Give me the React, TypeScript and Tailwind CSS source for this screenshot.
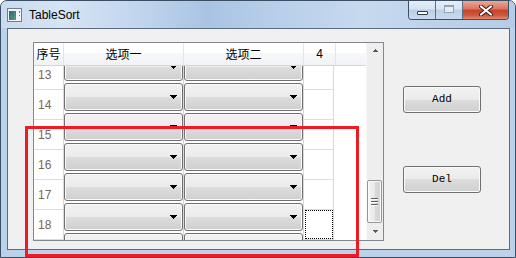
import React from 'react';

const rows = [13, 14, 15, 16, 17, 18, 19];
const labelRows = [13, 14, 15, 16, 17, 18];

const DownArrow: React.FC<{ small?: boolean }> = ({ small }) =>
  small ? (
    <svg width="7" height="4" viewBox="0 0 7 4" shapeRendering="crispEdges">
      <path d="M1 0h5v1h-1v1h-1v1h-1v-1h-1v-1h-1z" fill="#5a5a5a" />
    </svg>
  ) : (
    <svg width="7" height="4" viewBox="0 0 7 4" shapeRendering="crispEdges">
      <path d="M0 0h7v1h-1v1h-1v1h-1v1h-1v-1h-1v-1h-1v-1h-1z" fill="#000" />
    </svg>
  );

const UpArrow: React.FC = () => (
  <svg width="7" height="4" viewBox="0 0 7 4" shapeRendering="crispEdges">
    <path d="M3 0h1v1h1v1h1v1h-5v-1h1v-1h1z" fill="#5a5a5a" />
  </svg>
);

const Combo: React.FC = () => (
  <div className="h-[28px] rounded-[3px] border border-[#707070] bg-[linear-gradient(#f2f2f2_0%,#ebebeb_50%,#dddddd_50%,#cfcfcf_100%)] shadow-[inset_0_0_0_1px_#fafafa] flex items-center justify-end pr-[5px]">
    <DownArrow />
  </div>
);

const PushButton: React.FC<{ label: string }> = ({ label }) => (
  <button className="w-[78px] h-[27px] rounded-[3px] border border-[#707070] bg-[linear-gradient(#f2f2f2_0%,#ebebeb_50%,#dddddd_50%,#cfcfcf_100%)] shadow-[inset_0_0_0_1px_#fbfbfb] flex items-center justify-center font-['Liberation_Mono',monospace] text-[11px] text-black">
    {label}
  </button>
);

const AppIcon: React.FC = () => (
  <svg width="15" height="14" viewBox="0 0 15 14">
    <defs>
      <linearGradient id="ic" x1="0" y1="0" x2="1" y2="1">
        <stop offset="0" stopColor="#2f5f86" />
        <stop offset="1" stopColor="#5aa171" />
      </linearGradient>
    </defs>
    <rect x="0.5" y="0.5" width="14" height="13" fill="#f3f5f7" stroke="#6e7e90" />
    <rect x="2" y="3" width="7" height="9" fill="url(#ic)" />
    <rect x="12" y="3" width="1" height="2" fill="#4a7fae" />
    <rect x="12" y="7" width="1" height="1" fill="#4a7fae" />
  </svg>
);

const TitleButtons: React.FC = () => (
  <div className="flex h-[19px] rounded-b-[4px] border border-t-0 border-[#3e4f63] overflow-hidden mr-[6px]">
    <div className="w-[27px] border-r border-[#5d6f84] bg-[linear-gradient(#e6eef8_0%,#d6e3f2_45%,#bccfe6_50%,#cadbee_100%)] flex justify-center pt-[10px]">
      <div className="w-[11px] h-[4px] bg-white border border-[#2f3b48] rounded-[1px]" />
    </div>
    <div className="w-[27px] border-r border-[#5d6f84] bg-[linear-gradient(#e6eef8_0%,#d6e3f2_45%,#bccfe6_50%,#cadbee_100%)] flex justify-center pt-[4px]">
      <div className="w-[10px] h-[8px] border border-[#93a3b6] border-t-2 bg-[#e3ebf5]" />
    </div>
    <div className="w-[45px] bg-[linear-gradient(#eaa898_0%,#d9735e_45%,#c5422c_50%,#cf5840_80%,#e28c70_100%)] flex items-center justify-center">
      <svg width="14" height="11" viewBox="0 0 14 11">
        <path d="M2 1.5 L12 9.5 M12 1.5 L2 9.5" stroke="#3a1a14" strokeWidth="4" strokeLinecap="round" />
        <path d="M2 1.5 L12 9.5 M12 1.5 L2 9.5" stroke="#ffffff" strokeWidth="2.2" strokeLinecap="round" />
      </svg>
    </div>
  </div>
);

const Grip: React.FC = () => (
  <div className="flex flex-col gap-[1px]">
    {[0, 1, 2].map((i) => (
      <div key={i} className="w-[7px] h-[2px] border-t border-[#5f5f5f] border-b border-b-[#fafafa]" />
    ))}
  </div>
);

const Table: React.FC = () => (
  <div className="w-[351px] h-[199px] border border-[#828790] bg-white flex">
    <div className="flex-1 flex flex-col">
      {/* Header */}
      <div className="h-[23px] flex border-b border-[#d5d5d5] bg-[linear-gradient(#ffffff_0%,#ffffff_45%,#f7f8fa_46%,#f1f2f5_100%)] font-['Noto_Sans_CJK_SC',sans-serif] text-[12px] text-black">
        <div className="w-[30px] border-r border-[#e3e4e6] flex items-center justify-center">序号</div>
        <div className="w-[120px] border-r border-[#e3e4e6] flex items-center justify-center">选项一</div>
        <div className="w-[120px] border-r border-[#e3e4e6] flex items-center justify-center">选项二</div>
        <div className="w-[32px] border-r border-[#e3e4e6] flex items-center justify-center font-['Liberation_Sans',sans-serif]">4</div>
        <div className="flex-1" />
      </div>
      {/* Body */}
      <div className="flex-1 flex overflow-hidden">
        <div className="w-[30px] border-r border-[#d9d9d9] overflow-hidden">
          <div className="mt-[-6px]">
            {labelRows.map((r) => (
              <div key={r} className="h-[30px] border-b border-[#dcdcdc] flex items-center pl-[4px] font-['Liberation_Sans',sans-serif] text-[12px] text-[#76665b]">
                {r}
              </div>
            ))}
          </div>
        </div>
        {[0, 1].map((c) => (
          <div key={c} className="w-[120px] border-r border-[#d9d9d9] overflow-hidden">
            <div className="mt-[-14px]">
              {rows.map((r) => (
                <div key={r} className="h-[30px] pt-[1px]">
                  <Combo />
                </div>
              ))}
            </div>
          </div>
        ))}
        <div className="w-[30px] border-r border-[#d9d9d9] overflow-hidden">
          <div className="mt-[-6px]">
            {labelRows.map((r) => (
              <div key={r} className="h-[30px] border-b border-[#dcdcdc]">
                {r === 18 && <div className="h-full ml-[1px] border border-dotted border-black" />}
              </div>
            ))}
          </div>
        </div>
        <div className="flex-1" />
      </div>
    </div>
    {/* Scrollbar */}
    <div className="w-[17px] bg-[#eeeeee] border-l border-[#f6f6f6] flex flex-col">
      <div className="h-[17px] flex items-center justify-center pb-[1px]">
        <UpArrow />
      </div>
      <div className="flex-1 flex flex-col justify-end">
        <div className="h-[43px] mr-[1px] rounded-[2px] border border-[#959595] bg-[linear-gradient(90deg,#f5f5f5_0%,#e9e9e9_50%,#d9d9d9_51%,#d2d2d2_100%)] shadow-[inset_0_0_0_1px_#fafafa] flex items-center justify-center">
          <Grip />
        </div>
      </div>
      <div className="h-[17px] flex items-center justify-center">
        <DownArrow small />
      </div>
    </div>
  </div>
);

export default function App() {
  return (
    <div className="relative w-[516px] h-[258px] bg-white overflow-hidden font-['Liberation_Sans',sans-serif]">
      <div className="w-full h-full rounded-t-[7px] border border-[#3c4e63] bg-[#bcd2ea] flex flex-col">
        {/* Title bar */}
        <div className="h-[27px] flex justify-between rounded-t-[6px] bg-[linear-gradient(90deg,#c9dbef_0%,#d6e4f4_12%,#bfd4ec_28%,#a9c4e3_40%,#b9d0ea_55%,#c6d9ee_70%,#b4cce7_100%)]">
          <div className="flex items-center pl-[6px] gap-[7px]">
            <AppIcon />
            <span className="text-[12px] text-black">TableSort</span>
          </div>
          <TitleButtons />
        </div>
        {/* Client area */}
        <div className="h-[222px] ml-[6px] mr-[5px] border border-[#5c6b7a] bg-[#f0f0f0] flex pl-[25px] pt-[13px]">
          <Table />
          <div className="ml-[19px] flex flex-col pt-[44px] gap-[53px]">
            <PushButton label="Add" />
            <PushButton label="Del" />
          </div>
        </div>
      </div>
      {/* Annotation */}
      <div className="absolute left-[25px] top-[126px] w-[334px] h-[131px] border-[3px] border-[#ed1c24] pointer-events-none" />
    </div>
  );
}
